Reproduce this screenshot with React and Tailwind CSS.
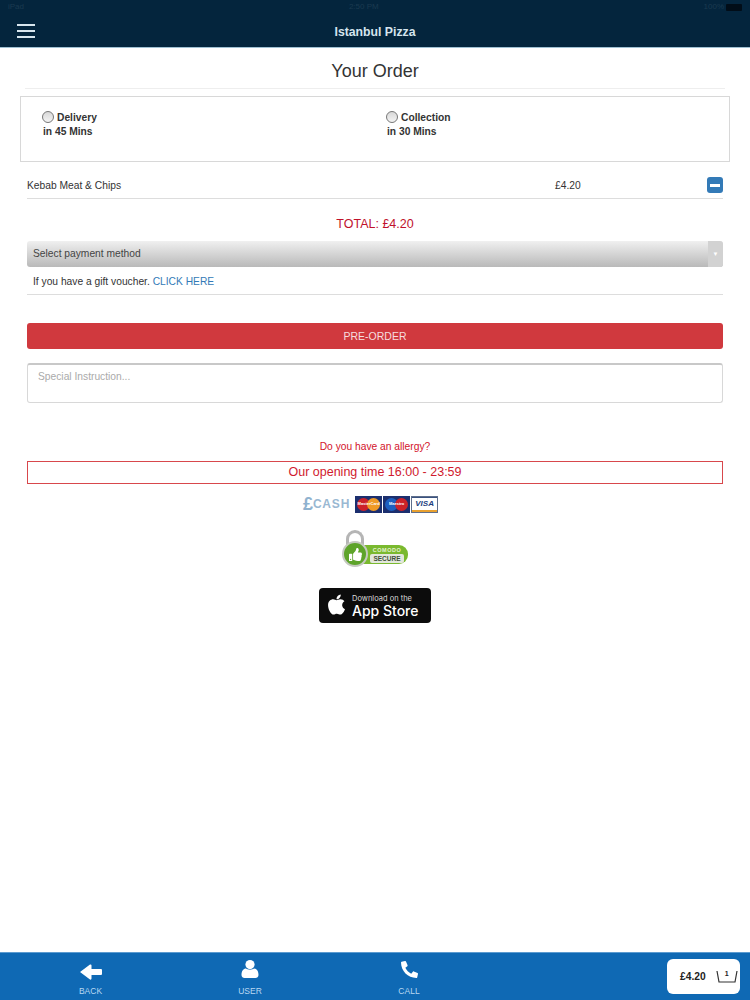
import React from 'react';
import { FaPhone, FaApple, FaThumbsUp } from 'react-icons/fa';

const font = { fontFamily: '"Liberation Sans", Arial, sans-serif' };

const Radio = () => (
  <span className="inline-block w-[12px] h-[12px] -ml-[1px] rounded-full border border-[#777] bg-gradient-to-b from-[#d8d8d8] to-[#f4f4f4] mr-[2px]"></span>
);

const Method = ({ label, time, className = '' }) => (
  <div className={`text-[10.25px] font-bold text-[#333] ${className}`}>
    <div className="flex items-center h-[14px] gap-[1px]">
      <Radio />
      <span className="pt-[2px]">{label}</span>
    </div>
    <div className="mt-[1px] leading-[14px]">{time}</div>
  </div>
);

const NavItem = ({ icon, label, className = '' }) => (
  <div className={`flex flex-col items-center text-white ${className}`}>
    <div className="h-[22px] flex items-center justify-center">{icon}</div>
    <span className="mt-[6px] text-[8.5px] leading-[10px] text-[#b9d8f2]">{label}</span>
  </div>
);

const BackIcon = () => (
  <svg width="22" height="16" viewBox="0 0 22 16" fill="white" className="mt-[5px]">
    <path d="M0 8 L10 0.5 Q11.5 0 11.5 1.5 L11.5 5 L21 5 Q22 5 22 6 L22 10 Q22 11 21 11 L11.5 11 L11.5 14.5 Q11.5 16 10 15.5 Z" />
  </svg>
);

const UserIcon = () => (
  <svg width="18" height="18" viewBox="0 0 18 18" fill="white">
    <ellipse cx="9" cy="4.6" rx="4.6" ry="4.6" />
    <path d="M0.5 15 C0.5 11 2.5 8.6 5 8.6 C6.5 10 11.5 10 13 8.6 C15.5 8.6 17.5 11 17.5 15 C17.5 17 16 18 14.5 18 L3.5 18 C2 18 0.5 17 0.5 15 Z" />
  </svg>
);

const PaymentLogos = () => (
  <div className="flex items-center justify-center h-[18px] pr-[9px]">
    <div className="flex items-center mr-[5px]">
      <span className="text-[18px] leading-none font-bold text-[#8fb2cf]">£</span>
      <span className="text-[12px] leading-none font-bold tracking-[0.8px] text-[#9ab8d2]">CASH</span>
    </div>
    <div className="relative w-[27px] h-[17px] bg-[#1c2f6e] overflow-hidden mr-[1px]">
      <span className="absolute left-[2px] top-[2px] w-[13px] h-[13px] rounded-full bg-[#cc2229]"></span>
      <span className="absolute right-[2px] top-[2px] w-[13px] h-[13px] rounded-full bg-[#f09a26]"></span>
      <span className="absolute inset-0 flex items-center justify-center text-[4px] font-bold text-white">MasterCard</span>
    </div>
    <div className="relative w-[27px] h-[17px] bg-[#1c2f6e] overflow-hidden mr-[1px]">
      <span className="absolute left-[2px] top-[2px] w-[13px] h-[13px] rounded-full bg-[#1d5fc0]"></span>
      <span className="absolute right-[2px] top-[2px] w-[13px] h-[13px] rounded-full bg-[#cc2229]"></span>
      <span className="absolute inset-0 flex items-center justify-center text-[4px] font-bold text-white">Maestro</span>
    </div>
    <div className="w-[27px] h-[17px] border border-[#5f6f8c] bg-white flex flex-col overflow-hidden">
      <div className="h-[2px] bg-[#39527f]"></div>
      <div className="flex-1 flex items-center justify-center text-[8px] italic font-bold text-[#1d3f80]">VISA</div>
      <div className="h-[3px] bg-[#e8a02f]"></div>
    </div>
  </div>
);

const ComodoBadge = () => (
  <div className="relative w-[66px] h-[38px] mx-auto">
    <div className="absolute left-[4px] top-0 w-[18px] h-[18px] rounded-t-full border-[3px] border-b-0 border-[#b5b5b5]"></div>
    <div className="absolute left-[12px] top-[15px] w-[54px] h-[19px] rounded-r-[9px] bg-[#7ab92f] pl-[14px] pr-[2px] flex flex-col items-center justify-center">
      <span className="text-[5.5px] leading-[7px] font-bold tracking-[0.5px] text-[#e4f2cf]">COMODO</span>
      <span className="w-[34px] h-[9px] rounded-[2px] bg-[#e3e7dc] text-[6.5px] leading-[9px] font-bold text-center text-[#40503a]">SECURE</span>
    </div>
    <div className="absolute left-0 top-[11px] w-[26px] h-[26px] rounded-full bg-[#5ea42a] border-2 border-[#c5c9c0] flex items-center justify-center">
      <FaThumbsUp className="text-white" size={13} />
    </div>
  </div>
);

const AppStoreBadge = () => (
  <div className="w-[112px] h-[35px] mx-auto rounded-[4px] bg-[#0c0c0c] flex items-center pl-[6px] text-white">
    <FaApple size={23} className="mr-[4px] mb-[2px]" />
    <div className="flex flex-col font-['Inter',sans-serif]">
      <span className="text-[7.5px] leading-[9px] text-[#dddddd]">Download on the</span>
      <span className="text-[14px] leading-[15px] font-medium">App Store</span>
    </div>
  </div>
);

export default function App() {
  return (
    <div className="h-[1000px] w-[750px] flex flex-col bg-white overflow-hidden" style={font}>
      <header className="relative h-[48px] bg-[#04253d] border-b border-[#9fc0d2] shrink-0">
        <div className="flex items-center justify-between h-[14px] px-[8px] text-[8px] text-[#1b3a50]">
          <span>iPad</span>
          <span>2:50 PM</span>
          <span className="flex items-center gap-[2px]">
            100%
            <span className="inline-block w-[16px] h-[7px] rounded-[1px] bg-[#010d18]"></span>
          </span>
        </div>
        <div className="relative flex items-center justify-center h-[33px]">
          <div className="absolute left-[17px] top-[10px] flex flex-col gap-[4px]">
            <span className="block w-[18px] h-[2px] bg-[#d8e6ee]"></span>
            <span className="block w-[18px] h-[2px] bg-[#d8e6ee]"></span>
            <span className="block w-[18px] h-[2px] bg-[#d8e6ee]"></span>
          </div>
          <span className="text-[12.25px] font-bold text-[#d5e4ee] mt-[3px]">Istanbul Pizza</span>
        </div>
      </header>

      <main className="flex-1 text-[#333]">
        <h1 className="mt-[13px] h-[28px] mx-[25px] border-b border-[#eeeeee] text-center text-[18px] leading-[21px] text-[#333]">
          Your Order
        </h1>

        <div className="mx-[20px] mt-[7px] h-[66px] border border-[#d8d8d8] flex pt-[13px] pl-[22px]">
          <Method label="Delivery" time="in 45 Mins" className="w-[344px]" />
          <Method label="Collection" time="in 30 Mins" />
        </div>

        <div className="mx-[27px] mt-[10px] h-[27px] border-b border-[#dddddd] flex items-center text-[10.25px]">
          <span className="w-[528px] pt-[2px]">Kebab Meat &amp; Chips</span>
          <span className="w-[152px] pt-[2px]">£4.20</span>
          <span className="w-[16px] h-[16px] rounded-[3px] bg-[#337ab7] flex items-center justify-center">
            <span className="block w-[10px] h-[3px] bg-white"></span>
          </span>
        </div>

        <div className="mt-[17px] text-center text-[12.5px] leading-[16px] text-[#c0112b]">TOTAL: £4.20</div>

        <div className="mx-[27px] mt-[9px] h-[26px] rounded-[3px] bg-gradient-to-b from-[#f0f0f0] to-[#b9b9b9] flex items-center justify-between text-[10.25px] text-[#444]">
          <span className="pl-[6px]">Select payment method</span>
          <span className="w-[15px] h-full bg-[#d2d2d2] rounded-r-[3px] flex items-center justify-center text-[6px] text-white">▼</span>
        </div>

        <div className="mx-[27px] h-[28px] border-b border-[#dddddd] pl-[6px] pt-[8px] text-[10.25px] leading-[14px] text-[#333]">
          If you have a gift voucher. <span className="text-[#337ab7]">CLICK HERE</span>
        </div>

        <div className="mx-[27px] mt-[28px] h-[26px] rounded-[3px] bg-[#d0393e] flex items-center justify-center pt-[1px] text-[10.5px] text-[#f6dede]">
          PRE-ORDER
        </div>

        <div className="mx-[27px] mt-[14px] h-[40px] rounded-[3px] border border-[#d8d8d8] border-t-2 border-t-[#c8c8c8] pl-[10px] pt-[5px] text-[10.25px] leading-[14px] text-[#aaaaaa]">
          Special Instruction...
        </div>

        <div className="mt-[37px] text-center text-[10.25px] leading-[14px] text-[#d3132b]">Do you have an allergy?</div>

        <div className="mx-[27px] mt-[7px] h-[23px] border border-[#d8474c] flex items-center justify-center text-[12.5px] text-[#d01a2e]">
          Our opening time 16:00 - 23:59
        </div>

        <div className="mt-[11px]">
          <PaymentLogos />
        </div>
        <div className="mt-[17px]">
          <ComodoBadge />
        </div>
        <div className="mt-[20px]">
          <AppStoreBadge />
        </div>
      </main>

      <footer className="relative h-[48px] shrink-0 bg-[#0f69b4] border-t border-[#5c9bd0] flex pt-[5px]">
        <NavItem className="w-[181px]" icon={<BackIcon />} label="BACK" />
        <NavItem className="w-[138px]" icon={<UserIcon />} label="USER" />
        <NavItem className="w-[180px]" icon={<FaPhone size={17} className="scale-x-[-1]" />} label="CALL" />
        <div className="absolute right-[10px] top-[6px] w-[73px] h-[35px] rounded-[6px] bg-white flex items-center pl-[13px] text-[#222]">
          <span className="text-[10.25px] font-bold">£4.20</span>
          <div className="relative ml-[10px]">
            <svg width="22" height="14" viewBox="0 0 22 14" fill="none" stroke="#333" strokeWidth="1.2">
              <path d="M1 1 L3 12 L19 12 L21 1" />
            </svg>
            <span className="absolute left-[9px] top-[0px] text-[7px] leading-[8px] font-bold">1</span>
          </div>
        </div>
      </footer>
    </div>
  );
}
